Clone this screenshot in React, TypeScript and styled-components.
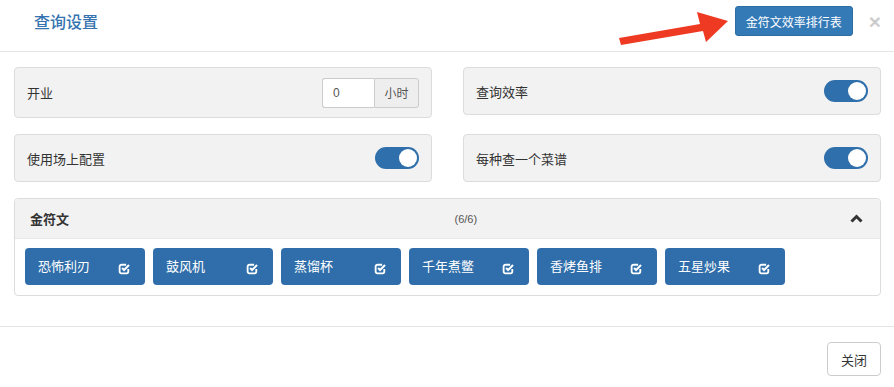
import styled, { createGlobalStyle } from 'styled-components'

const GlobalStyle = createGlobalStyle`
  html, body {
    margin: 0;
    padding: 0;
    background: #fff;
  }
  body {
    font-family: "Liberation Sans", "Noto Sans CJK SC", sans-serif;
    color: #333;
  }
  * {
    box-sizing: border-box;
  }
`

const runes = ['恐怖利刃', '鼓风机', '蒸馏杯', '千年煮鳖', '香烤鱼排', '五星炒果']

// bootstrap style "check-square-o"
const CheckIcon = () => (
  <svg width="13" height="13" viewBox="0 0 12 12" fill="none">
    <path
      d="M9.5 6.5v2.3a1.7 1.7 0 0 1-1.7 1.7H3.2a1.7 1.7 0 0 1-1.7-1.7V4.2a1.7 1.7 0 0 1 1.7-1.7h4.3"
      stroke="#fff"
      strokeWidth="1.7"
    />
    <path d="M3.8 5.6l1.8 1.8 4.6-4.6" stroke="#fff" strokeWidth="1.9" />
  </svg>
)

const ChevronUp = () => (
  <svg width="13" height="9" viewBox="0 0 13 9">
    <path d="M1.5 7.5l5-5 5 5" stroke="#333" strokeWidth="3" fill="none" />
  </svg>
)

const Toggle = ({ on }: { on: boolean }) => (
  <Switch $on={on}>
    <Knob $on={on} />
  </Switch>
)

const App = () => {
  return (
    <Modal>
      <GlobalStyle />
      <Header>
        <Title>查询设置</Title>
        <RankButton>金符文效率排行表</RankButton>
        <CloseX>×</CloseX>
        {/* red pointer arrow drawn over the header */}
        <Arrow width="894" height="51" viewBox="0 0 894 51">
          <polygon
            points="619,38 700,24 697,12 728,21 706,42 703,31 621,45"
            fill="#ee3a22"
          />
        </Arrow>
      </Header>

      <Body>
        <SettingsGrid>
          <SettingCard $tall>
            <Label>开业</Label>
            <InputGroup>
              <NumberInput defaultValue="0" />
              <Addon>小时</Addon>
            </InputGroup>
          </SettingCard>
          <SettingCard>
            <Label>查询效率</Label>
            <Toggle on />
          </SettingCard>
          <SettingCard>
            <Label>使用场上配置</Label>
            <Toggle on />
          </SettingCard>
          <SettingCard>
            <Label>每种查一个菜谱</Label>
            <Toggle on />
          </SettingCard>
        </SettingsGrid>

        <Panel>
          <PanelHeader>
            <PanelTitle>金符文</PanelTitle>
            <PanelRight>
              <Count>(6/6)</Count>
              <ChevronUp />
            </PanelRight>
          </PanelHeader>
          <TagList>
            {runes.map(name => (
              <Tag key={name}>
                <span>{name}</span>
                <CheckIcon />
              </Tag>
            ))}
          </TagList>
        </Panel>
      </Body>

      <Footer>
        <CloseButton>关闭</CloseButton>
      </Footer>
    </Modal>
  )
}

export default App

const Modal = styled.div`
  width: 894px;
  background: #fff;
`

const Header = styled.div`
  position: relative;
  display: flex;
  align-items: center;
  height: 52px;
  padding: 6px 13px 15px 34px;
  border-bottom: 1px solid #e5e5e5;
`

const Title = styled.h4`
  flex: 1;
  margin: 0;
  font-size: 16px;
  font-weight: 500;
  color: #3573b0;
  font-family: "Noto Sans CJK SC", sans-serif;
`

const RankButton = styled.button`
  position: relative;
  z-index: 1;
  width: 118px;
  height: 30px;
  padding: 0;
  border: 1px solid #2e6da4;
  border-radius: 3px;
  background: #337ab7;
  color: #fff;
  font-size: 12px;
  font-family: "Noto Sans CJK SC", sans-serif;
`

const CloseX = styled.span`
  margin-left: 16px;
  font-size: 21px;
  font-weight: bold;
  line-height: 1;
  color: #000;
  opacity: 0.2;
  font-family: "Liberation Sans", sans-serif;
`

const Arrow = styled.svg`
  position: absolute;
  left: 0;
  top: 0;
  pointer-events: none;
`

const Body = styled.div`
  padding: 15px 13px 30px 14px;
`

const SettingsGrid = styled.div`
  display: grid;
  grid-template-columns: 418px 418px;
  column-gap: 31px;
  row-gap: 16px;
  align-items: start;
`

const SettingCard = styled.div<{ $tall?: boolean }>`
  display: flex;
  align-items: center;
  justify-content: space-between;
  height: ${props => (props.$tall ? '51px' : '48px')};
  padding: 0 12px;
  background: #f2f2f2;
  border: 1px solid #dcdcdc;
  border-radius: 4px;
`

const Label = styled.span`
  font-size: 13px;
  color: #333;
  font-family: "Noto Sans CJK SC", sans-serif;
`

const InputGroup = styled.div`
  display: flex;
  height: 30px;
`

const NumberInput = styled.input`
  width: 52px;
  height: 30px;
  padding: 0 10px;
  border: 1px solid #ccc;
  border-right: none;
  border-radius: 3px 0 0 3px;
  font-size: 12px;
  color: #555;
  font-family: "Liberation Sans", sans-serif;
  outline: none;
`

const Addon = styled.span`
  display: flex;
  align-items: center;
  justify-content: center;
  width: 45px;
  border: 1px solid #ccc;
  border-radius: 0 3px 3px 0;
  background: #eee;
  font-size: 12px;
  color: #555;
  font-family: "Noto Sans CJK SC", sans-serif;
`

const Switch = styled.span<{ $on: boolean }>`
  display: flex;
  align-items: center;
  width: 44px;
  height: 22px;
  padding: 2px;
  border-radius: 11px;
  background: ${props => (props.$on ? '#2f6fab' : '#ccc')};
  justify-content: ${props => (props.$on ? 'flex-end' : 'flex-start')};
`

const Knob = styled.span<{ $on: boolean }>`
  width: 18px;
  height: 18px;
  border-radius: 50%;
  background: #fff;
`

const Panel = styled.div`
  margin-top: 16px;
  border: 1px solid #dcdcdc;
  border-radius: 4px;
  overflow: hidden;
`

const PanelHeader = styled.div`
  display: grid;
  grid-template-columns: 1fr 1fr;
  align-items: center;
  height: 40px;
  padding: 0 17px 0 15px;
  background: #f2f2f2;
  border-bottom: 1px solid #e8e8e8;
`

const PanelTitle = styled.span`
  font-size: 13px;
  font-weight: bold;
  color: #333;
  font-family: "Noto Sans CJK SC", sans-serif;
`

const PanelRight = styled.div`
  display: flex;
  align-items: center;
  justify-content: space-between;
  padding-left: 8px;
`

const Count = styled.span`
  font-size: 11px;
  color: #555;
  font-family: "Liberation Sans", sans-serif;
`

const TagList = styled.div`
  display: flex;
  flex-wrap: wrap;
  gap: 8px;
  padding: 9px 10px 10px;
`

const Tag = styled.div`
  display: flex;
  align-items: center;
  justify-content: space-between;
  width: 120px;
  height: 37px;
  padding: 0 14px 0 13px;
  background: #2f6eaa;
  border-radius: 4px;
  color: #fff;
  font-size: 13px;
  font-family: "Noto Sans CJK SC", sans-serif;

  svg {
    margin-top: 4px;
  }
  span {
    margin-top: -3px;
  }
`

const Footer = styled.div`
  display: flex;
  justify-content: flex-end;
  padding: 15px 13px 15px;
  border-top: 1px solid #e5e5e5;
`

const CloseButton = styled.button`
  width: 54px;
  height: 34px;
  padding: 0;
  background: #fff;
  border: 1px solid #ccc;
  border-radius: 4px;
  font-size: 13px;
  color: #333;
  font-family: "Noto Sans CJK SC", sans-serif;
`
